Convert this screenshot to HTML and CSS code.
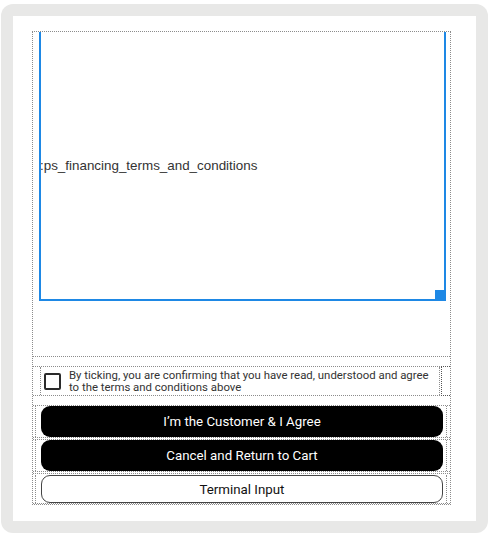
FILE: index.html
```html
<!DOCTYPE html>
<html>
<head>
<meta charset="utf-8">
<link rel="stylesheet" href="styles.css">
</head>
<body>
<div class="frame">
  <div class="panel">
    <div class="container">
      <div class="editor-area">
        <div class="editor">
          <span class="editor-text">:ps_financing_terms_and_conditions</span>
          <span class="handle"></span>
        </div>
      </div>
      <div class="check-section">
        <div class="check-wrap">
          <label class="check-box">
            <span class="checkbox"></span>
            <span class="check-text">By ticking, you are confirming that you have read, understood and agree to the terms and conditions above</span>
          </label>
          <span class="side-box"></span>
        </div>
      </div>
      <div class="btn-row">
        <div class="btn-cell"><button class="btn btn-dark">I’m the Customer &amp; I Agree</button></div>
      </div>
      <div class="btn-row">
        <div class="btn-cell"><button class="btn btn-dark">Cancel and Return to Cart</button></div>
      </div>
      <div class="btn-row last">
        <div class="btn-cell"><button class="btn btn-light">Terminal Input</button></div>
      </div>
    </div>
  </div>
</div>
</body>
</html>
```
FILE: styles.css
```css
* { box-sizing: border-box; }
html, body { margin: 0; padding: 0; background: #fff; }
body { font-family: Roboto, "Liberation Sans", sans-serif; }

.frame {
  margin: 4px 0 0 1px;
  width: 487px;
  height: 529px;
  background: #e8e8e7;
  border-radius: 12px;
  padding: 12px;
}
.panel {
  background: #fff;
  height: 505px;
  padding: 15px 25px 16px 19px;
}
.container {
  border: 1px dotted #8c8c8c;
  height: 474px;
  display: flex;
  flex-direction: column;
}
.editor-area {
  height: 325px;
  padding: 0 4px 0 6px;
}
.editor {
  position: relative;
  height: 269px;
  border: 2px solid #1e88e5;
  border-top: none;
  display: flex;
  align-items: center;
  overflow: hidden;
}
.editor-text {
  font-family: "Liberation Sans", Arial, Helvetica, sans-serif;
  font-size: 13.4px;
  color: #333;
  white-space: nowrap;
  margin-left: -1px;
}
.handle {
  position: absolute;
  right: 0;
  bottom: 0;
  width: 9px;
  height: 9px;
  background: #1e88e5;
}
.check-section {
  border-top: 1px dotted #8c8c8c;
  padding: 9px 0;
}
.check-wrap {
  display: flex;
  height: 30px;
  border-top: 1px dotted #8c8c8c;
  border-bottom: 1px dotted #8c8c8c;
}
.check-box {
  flex: 1;
  margin-left: 7px;
  border-left: 1px dotted #8c8c8c;
  border-right: 1px dotted #8c8c8c;
  display: flex;
  align-items: center;
  padding-left: 3px;
}
.checkbox {
  flex: none;
  width: 17px;
  height: 17px;
  border: 2px solid #2b2b2b;
  border-radius: 2px;
  margin-right: 8px;
}
.check-text {
  font-size: 11.4px;
  line-height: 12px;
  color: #333;
}
.side-box {
  width: 9px;
  margin-left: 1px;
  margin-top: -1px;
  margin-bottom: -1px;
  border: 1px dotted #555;
  border-right: none;
}
.btn-row {
  border-top: 1px dotted #8c8c8c;
  border-bottom: 1px dotted #8c8c8c;
  padding: 0 3px 0 2px;
  margin-bottom: 1px;
}
.btn-row.last { margin-bottom: 0; }
.btn-cell {
  border-left: 1px dotted #8c8c8c;
  border-right: 1px dotted #8c8c8c;
  padding: 0 3px 0 5px;
}
.btn {
  display: block;
  width: 100%;
  height: 31px;
  border-radius: 9px;
  font-family: Roboto, "Liberation Sans", sans-serif;
  font-size: 13.3px;
  padding: 0;
  cursor: pointer;
}
.btn-dark {
  background: #000;
  color: #fff;
  border: none;
}
.btn-light {
  background: #fff;
  color: #111;
  border: 1px solid #444;
  height: 28px;
  margin-top: 1px;
}
```
